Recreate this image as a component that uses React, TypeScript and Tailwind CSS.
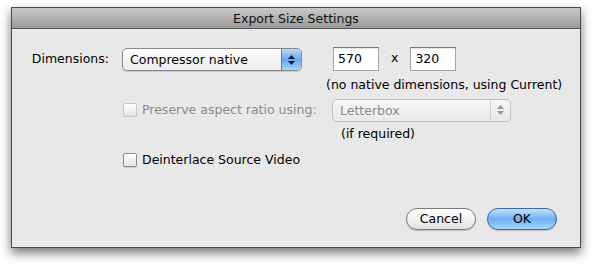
import React from 'react';

const font = { fontFamily: '"DejaVu Sans", "Liberation Sans", sans-serif' };

// Aqua popup button with blue stepper on the right
const Popup = ({ label, width, disabled }: { label: string; width: string; disabled?: boolean }) => (
  <div
    className={`flex h-[23px] items-stretch rounded-[5px] border ${width} ${
      disabled
        ? 'border-[#c4c4c4] bg-gradient-to-b from-[#f6f6f6] to-[#e9e9e9]'
        : 'border-[#8a8a8a] bg-gradient-to-b from-white to-[#ececec] shadow-[0_1px_1px_rgba(0,0,0,0.15)]'
    }`}
  >
    <span className={`flex-1 pl-[7px] leading-[21px] ${disabled ? 'text-[#8c8c8c]' : 'text-black'}`}>{label}</span>
    <div
      className={`flex w-[20px] flex-col items-center justify-center gap-[2px] rounded-r-[4px] border-l ${
        disabled
          ? 'border-[#d0d0d0] bg-transparent text-[#9a9a9a]'
          : 'border-[#5a7fb8] bg-gradient-to-b from-[#bcd9f7] via-[#6aa8ec] to-[#a7d3fb] text-[#10203a]'
      }`}
    >
      <svg width="7" height="4" viewBox="0 0 7 4"><path d="M3.5 0L7 4H0z" fill="currentColor" /></svg>
      <svg width="7" height="4" viewBox="0 0 7 4"><path d="M0 0h7L3.5 4z" fill="currentColor" /></svg>
    </div>
  </div>
);

const Field = ({ value }: { value: string }) => (
  <div className="h-[24px] w-[46px] border border-[#a4a4a4] border-t-[#7a7a7a] bg-white pl-[4px] leading-[22px] text-black shadow-[inset_0_1px_1px_rgba(0,0,0,0.1)]">
    {value}
  </div>
);

const Checkbox = ({ label, disabled }: { label: string; disabled?: boolean }) => (
  <div className="flex items-center gap-[5px]">
    <div
      className={`h-[14px] w-[14px] rounded-[2px] border bg-gradient-to-b from-white to-[#e4e4e4] ${
        disabled ? 'border-[#c6c6c6]' : 'border-[#8e8e8e] shadow-[0_1px_1px_rgba(0,0,0,0.15)]'
      }`}
    />
    <span className={disabled ? 'text-[#8c8c8c]' : 'text-black'}>{label}</span>
  </div>
);

export default function App() {
  return (
    <div className="h-[264px] w-[592px] bg-white pl-[11px] pt-[7px] text-[12.5px]" style={font}>
      <div className="flex h-[241px] w-[570px] flex-col border border-[#4a4a4a] bg-[#e8e8e8] shadow-[0_5px_10px_rgba(0,0,0,0.55)]">
        {/* title bar */}
        <div className="h-[21px] border-b border-[#555] bg-gradient-to-b from-[#c9c9c9] to-[#9a9a9a] text-center leading-[21px] text-[#111]">
          Export Size Settings
        </div>

        <div className="flex flex-1 flex-col pt-[19px]">
          {/* dimensions row */}
          <div className="flex items-center">
            <div className="w-[97px] text-right text-black">Dimensions:</div>
            <div className="ml-[13px]">
              <Popup label="Compressor native" width="w-[180px]" />
            </div>
            <div className="ml-[31px] -mt-[2px] flex items-center">
              <Field value="570" />
              <span className="mx-[12px] text-black">x</span>
              <Field value="320" />
            </div>
          </div>
          <div className="ml-[314px] mt-[5px] text-black">(no native dimensions, using Current)</div>

          {/* aspect ratio row */}
          <div className="mt-[4px] flex items-center">
            <div className="ml-[111px] w-[209px]">
              <Checkbox label="Preserve aspect ratio using:" disabled />
            </div>
            <Popup label="Letterbox" width="w-[179px]" disabled />
          </div>
          <div className="ml-[329px] mt-[3px] text-black">(if required)</div>

          {/* deinterlace */}
          <div className="ml-[111px] mt-[7px]">
            <Checkbox label="Deinterlace Source Video" />
          </div>

          {/* buttons */}
          <div className="mt-auto mb-[17px] flex justify-end gap-[11px] pr-[23px]">
            <button className="h-[22px] w-[70px] rounded-full border border-[#7c7c7c] bg-gradient-to-b from-white via-[#f2f2f2] to-[#e2e2e2] text-black shadow-[0_1px_1px_rgba(0,0,0,0.2)]">
              Cancel
            </button>
            <button className="h-[22px] w-[70px] rounded-full border border-[#3a6aa8] bg-gradient-to-b from-[#c6e1fb] via-[#6eaff0] to-[#a9d6fc] text-black shadow-[0_1px_1px_rgba(0,0,0,0.2)]">
              OK
            </button>
          </div>
        </div>
      </div>
    </div>
  );
}
